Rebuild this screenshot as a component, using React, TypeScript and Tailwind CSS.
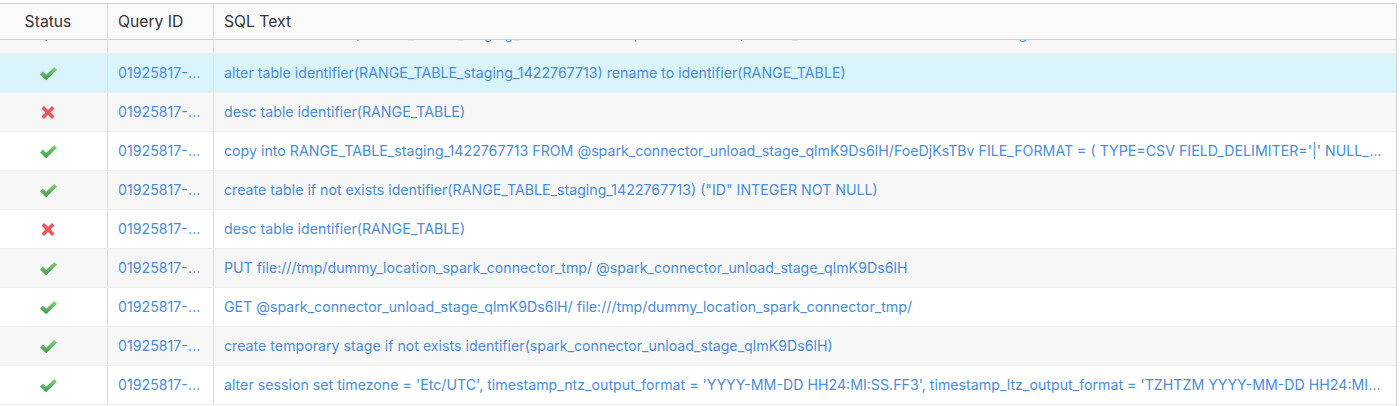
import React from 'react';

type Row = {
  ok: boolean;
  id: string;
  sql: string;
};

const rows: Row[] = [
  { ok: true, id: '01925817-0000-4e1c-0000-0009a2e6', sql: 'alter table identifier(RANGE_TABLE_staging_1422767713) swap with identifier(RANGE_TABLE) and then select something from the session' },
  { ok: true, id: '01925817-0000-4e1c-0000-0009a2e7', sql: 'alter table identifier(RANGE_TABLE_staging_1422767713) rename to identifier(RANGE_TABLE)' },
  { ok: false, id: '01925817-0000-4e1c-0000-0009a2e8', sql: 'desc table identifier(RANGE_TABLE)' },
  { ok: true, id: '01925817-0000-4e1c-0000-0009a2e9', sql: "copy into RANGE_TABLE_staging_1422767713 FROM @spark_connector_unload_stage_qlmK9Ds6lH/FoeDjKsTBv FILE_FORMAT = ( TYPE=CSV FIELD_DELIMITER='|' NULL_IF=() EMPTY_FIELD_AS_NULL=FALSE )" },
  { ok: true, id: '01925817-0000-4e1c-0000-0009a2ea', sql: 'create table if not exists identifier(RANGE_TABLE_staging_1422767713) ("ID" INTEGER NOT NULL)' },
  { ok: false, id: '01925817-0000-4e1c-0000-0009a2eb', sql: 'desc table identifier(RANGE_TABLE)' },
  { ok: true, id: '01925817-0000-4e1c-0000-0009a2ec', sql: 'PUT file:///tmp/dummy_location_spark_connector_tmp/ @spark_connector_unload_stage_qlmK9Ds6lH' },
  { ok: true, id: '01925817-0000-4e1c-0000-0009a2ed', sql: 'GET @spark_connector_unload_stage_qlmK9Ds6lH/ file:///tmp/dummy_location_spark_connector_tmp/' },
  { ok: true, id: '01925817-0000-4e1c-0000-0009a2ee', sql: 'create temporary stage if not exists identifier(spark_connector_unload_stage_qlmK9Ds6lH)' },
  { ok: true, id: '01925817-0000-4e1c-0000-0009a2ef', sql: "alter session set timezone = 'Etc/UTC', timestamp_ntz_output_format = 'YYYY-MM-DD HH24:MI:SS.FF3', timestamp_ltz_output_format = 'TZHTZM YYYY-MM-DD HH24:MI:SS.FF3'" },
];

const CheckIcon = () => (
  <svg width="19" height="15" viewBox="0 0 19 15">
    <defs>
      <linearGradient id="okg" x1="0" y1="0" x2="0" y2="1">
        <stop offset="0" stopColor="#84d27e" />
        <stop offset="1" stopColor="#3f9b49" />
      </linearGradient>
    </defs>
    <path d="M1 8.4 L3.8 5.6 L7.2 8.8 L15.2 1 L18 3.8 L7.2 14.2 Z" fill="url(#okg)" />
  </svg>
);

const CrossIcon = () => (
  <svg width="16" height="15" viewBox="0 0 16 15">
    <path
      d="M1.5 3.6 L4 1 L8 5 L12 1 L14.5 3.6 L10.6 7.5 L14.5 11.4 L12 14 L8 10 L4 14 L1.5 11.4 L5.4 7.5 Z"
      fill="#ec5461"
    />
  </svg>
);

const font = { fontFamily: 'Inter, "Noto Sans", sans-serif' };

export default function App() {
  return (
    <div className="w-[1400px] h-[406px] bg-white overflow-hidden pt-[3px]" style={font}>
      <div className="w-[1397px] border-t border-r border-[#d2d2d2]">
        <div className="grid grid-cols-[108px_106px_1fr] h-[36px] bg-[#fafafa] border-b border-[#d2d2d2] text-[15.7px] text-[#333333]">
          <div className="flex items-center justify-center pr-[11px] border-r border-[#dcdcdc]">Status</div>
          <div className="flex items-center px-[10px] border-r border-[#dcdcdc]">Query ID</div>
          <div className="flex items-center px-[10px]">SQL Text</div>
        </div>
        <div className="h-[366px] overflow-hidden">
          <div className="-mt-[25px]">
            {rows.map((r, i) => {
              const bg = i === 1 ? 'bg-[#d9f4fb]' : i % 2 === 0 ? 'bg-[#f8f7f7]' : 'bg-white';
              return (
                <div
                  key={i}
                  className={`grid grid-cols-[108px_106px_1fr] h-[39px] border-b border-[#eeeeee] text-[14.2px] text-[#4a8dd8] ${bg}`}
                >
                  <div className="flex items-center justify-center pr-[11px] border-r border-[#dcdcdc]">
                    {r.ok ? <CheckIcon /> : <CrossIcon />}
                  </div>
                  <div className="flex items-center px-[10px] border-r border-[#dcdcdc] min-w-0">
                    <span className="truncate">{r.id}</span>
                  </div>
                  <div className="flex items-center pl-[10px] pr-[14px] min-w-0">
                    <span className="truncate">{r.sql}</span>
                  </div>
                </div>
              );
            })}
          </div>
        </div>
      </div>
    </div>
  );
}
